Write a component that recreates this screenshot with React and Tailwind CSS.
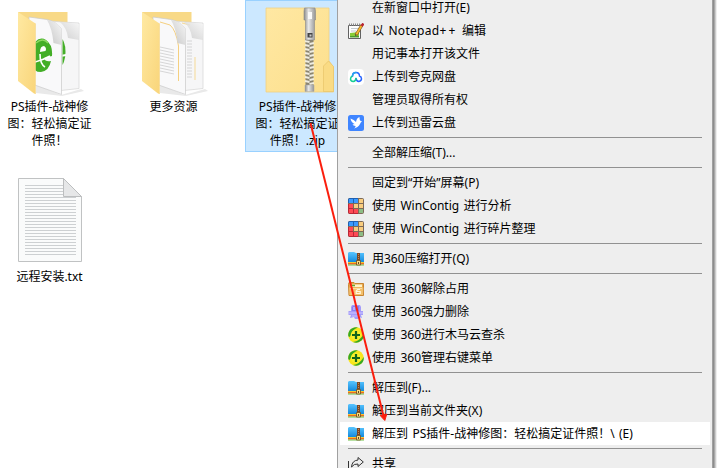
function OpenFolder({ children }) {
  return (
    <svg viewBox="2 2 96 96" className="w-24 h-24 shrink-0">
      <defs>
        <linearGradient id="flap" x1="0" y1="0" x2="1" y2="1">
          <stop offset="0" stopColor="#ffe9a2" />
          <stop offset="1" stopColor="#f9d57a" />
        </linearGradient>
        <linearGradient id="fold" x1="0" y1="1" x2="1" y2="0">
          <stop offset="0" stopColor="#c4c4c4" />
          <stop offset="1" stopColor="#f7f7f7" />
        </linearGradient>
        <clipPath id="front-page">
          <path d="M35 18 61 29V94L35 85Z" />
        </clipPath>
        <clipPath id="back-page">
          <path d="M62.500 24 79 24V89L62.500 92Z" />
        </clipPath>
      </defs>
      <path d="M36 85 61 95 81 89 84 91 62 96 36 93Z" fill="#e9e9e9" />
      <path d="M18 12h49.500v70L36 85Z" fill="#f8d987" />
      <path d="M50 21 62 22 79 23V88.500L56 91Z" fill="#f6f6f7" stroke="#d4d4d4" strokeWidth=".7" />
      <path d="M29 17 47 19.500Q57 22 61.500 29V94.500L29 83Z" fill="#f9f9fa" stroke="#c8c8c8" strokeWidth=".7" />
      {children}
      <path d="M47 20Q52 28 53.500 43L61.500 45V29Q57 21 47 20Z" fill="url(#fold)" />
      <path d="M60 22Q67 28 68 38L79 40V24Z" fill="url(#fold)" opacity=".8" />
      <path d="M18 12 35.500 23.500V94L34 93.500 18 81Z" fill="url(#flap)" />
      <path d="M35.500 23.500V94" stroke="#f5d78c" strokeWidth=".6" />
    </svg>
  );
}

function BrowserFolder() {
  return (
    <OpenFolder>
      <g clipPath="url(#back-page)">
        <ellipse cx="60" cy="52" rx="5.500" ry="14" fill="#45ae29" />
        <path d="M61 56 66 55" stroke="#fff" strokeWidth="2" />
      </g>
      <g clipPath="url(#front-page)">
        <path d="M34 43Q40 36 46 40Q53 45 52 56L44 58Q45 62 51 61Q49 71 41 72Q36 72 34 69Z" fill="#43ae27" />
        <path d="M40 52Q40 46 44 46Q47 48 45.500 51Z" fill="#fff" />
        <path d="M35 62Q43 60 50 56M40 54Q40 64 45 67" fill="none" stroke="#fff" strokeWidth="1.600" />
        <path d="M36 43Q43 37 48 43" fill="none" stroke="#8bd860" strokeWidth="1.500" />
      </g>
    </OpenFolder>
  );
}

function DocsFolder() {
  return (
    <OpenFolder>
      <path d="M36 22 46 25Q52 30 54.500 46V81" fill="none" stroke="#f5d080" strokeWidth="1" />
      <path d="M58 23 66 25M71 57V80" fill="none" stroke="#f5d996" strokeWidth="1" />
      <g stroke="#cdcdcd" strokeWidth=".8">
        <path d="M36 47 50 50M36 50 50 53M36 53 50 56M36 56 50 59M36 59 50 62M36 62 50 65M36 65 50 68M36 68 50 71M36 71 50 74" />
        <path d="M63 41 68 41M63 44 68 44M63 47 68 47M63 50 68 50M63 53 68 53M63 56 68 56M63 59 68 59M63 62 68 62M63 65 68 65M63 68 68 68M63 71 68 71M63 74 68 74M63 77 68 77" />
      </g>
    </OpenFolder>
  );
}

const teeth = Array.from({ length: 11 }, (_, i) => 41 + i * 4);

function ZipFolder() {
  return (
    <svg viewBox="250 2 96 96" className="w-24 h-24 shrink-0">
      <defs>
        <linearGradient id="zip" x1="0" y1="0" x2="1" y2="1">
          <stop offset="0" stopColor="#ffe8a3" />
          <stop offset="1" stopColor="#fcdf8c" />
        </linearGradient>
        <linearGradient id="metal">
          <stop offset="0" stopColor="#8b8b8b" />
          <stop offset=".4" stopColor="#e8e8e8" />
          <stop offset="1" stopColor="#949494" />
        </linearGradient>
      </defs>
      <path d="M266 8h63v53l4.500 6v25H266Z" fill="url(#zip)" stroke="#f0d083" strokeWidth=".8" />
      <path d="M323.500 91.500V66L328.500 61 333.500 66.500V91.500Z" fill="#fadb84" stroke="#e8c468" strokeWidth=".7" />
      <path d="M305.500 39h8v48h-8Z" fill="#8a8470" />
      {teeth.map((y) => (
        <g key={y} stroke="#efece0" strokeWidth="1.800">
          <path d={`M305 ${y}l4.500 1M309.500 ${y + 3}l4.500-1`} />
        </g>
      ))}
      <path d="M304.500 8h10.500l.5 3v9h-1v20h-9V20h-1.500v-9Z" fill="url(#metal)" stroke="#8c8c8c" strokeWidth=".6" />
      <path d="M308 12h4v7h-4Z" fill="#fafafa" />
      <path d="M307.500 33h5v4.500h-5Z" fill="#444" />
      <path d="M309.500 34.500h2v2h-2Z" fill="#ccc" />
      <path d="M305 85h9v6.500h-9Z" fill="url(#metal)" stroke="#aaa" strokeWidth=".5" />
    </svg>
  );
}

const textLines = Array.from({ length: 24 }, (_, i) => 185.5 + i * 3);

function TextFile() {
  return (
    <svg viewBox="2 172 96 96" className="w-24 h-24 shrink-0">
      <path d="M18.500 178.500H63.500L81.500 196.500V261.500H18.500Z" fill="#fafbfb" stroke="#c0c2c3" />
      {textLines.map((y) => (
        <path key={y} d={`M25 ${y}H${y < 197 ? 63 : 76}`} stroke="#cdd0d2" />
      ))}
      <path d="M63.500 178.500 81.500 196.500H63.500Z" fill="#e6e7e8" stroke="#bcbebf" />
    </svg>
  );
}

function NotepadIcon() {
  return (
    <svg viewBox="0 0 16 16" className="w-4 h-4">
      <path d="M.5 2.500h12v13H.5Z" fill="#fdfdfd" stroke="#626262" />
      <path d="M2 10Q7 10 11 8v6H2Z" fill="#87cc35" />
      <path d="M2 13h9v1.500H2Z" fill="#4c9b2b" />
      <path d="M1 1.500h11" stroke="#8b8b8b" strokeDasharray="1 1" strokeWidth="2" />
      <path d="M3 5.500h7M3 8h5" stroke="#c3cace" />
      <path d="M14 2 8 12" stroke="#795522" strokeWidth="3" />
      <path d="M14 2 8 12" stroke="#f8b62b" strokeWidth="1.800" />
      <path d="M15.500.5 13.500 3" stroke="#b82330" strokeWidth="2.500" />
      <path d="m7 13 .5-2 1.500 1Z" fill="#333" />
    </svg>
  );
}

function QuarkIcon() {
  return (
    <svg viewBox="0 0 16 16" className="w-4 h-4">
      <rect width="16" height="16" rx="4" fill="#fff" />
      <g fill="none" strokeWidth="1.500" strokeLinecap="round">
        <path d="M4.500 7Q4.700 3.500 8 3.500T11.500 7Q13.500 7.500 13.500 9.700T10.800 12.500Q8.500 12.300 8 9.500" stroke="#2864ff" />
        <path d="M4.500 7Q2.500 7.800 2.500 10T5.300 12.500Q7.500 12.300 8 9.500" stroke="#16ce93" />
        <path d="M4.500 7Q4.700 3.500 8 3.500" stroke="#25a5ed" />
      </g>
    </svg>
  );
}

function XunleiIcon() {
  return (
    <svg viewBox="0 0 16 16" className="w-4 h-4">
      <rect width="16" height="16" rx="2.500" fill="#3f85ff" />
      <path d="M2.500 3.500Q6 4.500 8 7Q8.500 3 11.500 2Q11.500 4 12 5.500L14 6.500Q12.500 7 12 9Q10.500 12 6 13.500Q8 12 7.500 11Q5 11 4.500 9Q6 9.500 6.500 9Q3 7 2.500 3.500Z" fill="#fff" />
    </svg>
  );
}

function WinContigIcon() {
  return (
    <svg viewBox="0 0 16 16" className="w-4 h-4">
      <rect width="16" height="16" rx="2" fill="#7d6a58" />
      <path d="M1 1h4v4H1ZM6 1h4v4H6Z" fill="#3b9aff" />
      <path d="M11 1h4v4h-4ZM11 6h4v4h-4ZM6 6h4v4H6Z" fill="#f9cd7e" />
      <path d="M1 6h4v4H1ZM1 11h4v4H1ZM6 11h4v4H6Z" fill="#ff4b55" />
      <path d="M11 11h4v4h-4Z" fill="#8dbd85" />
      <path d="M0 2q0-2 2-2h8v1H1v4H0ZM5 1h1v4H5Z" fill="#1e60b2" />
      <path d="M0 6h1v9h9v1H2q-2 0-2-2ZM5 11h1v4H5ZM1 10h4v1H1Z" fill="#bb2736" />
    </svg>
  );
}

function ZipIcon() {
  return (
    <svg viewBox="0 0 16 16" className="w-4 h-4">
      <defs>
        <linearGradient id="zip-blue" x1="0" y1="0" x2="0" y2="1">
          <stop offset="0" stopColor="#59c5ff" />
          <stop offset="1" stopColor="#1489dc" />
        </linearGradient>
      </defs>
      <path d="M0 2 1 1h5l2 1h8v9H0Z" fill="url(#zip-blue)" />
      <path d="M0 11h16v1H0Z" fill="#f5c62f" />
      <path d="M0 12h16v1.500H0Z" fill="#ef6b1e" />
      <path d="M0 13.500h16v1H0Z" fill="#6fc148" />
      <path d="M9 2h3v9H9Z" fill="#794728" />
      <path d="M10.500 3v7" stroke="#c9874a" strokeDasharray="1 1" />
      <path d="M8.500 9.500h4v4.500h-4Z" fill="#f8dc83" stroke="#6c4a1d" strokeWidth=".8" />
      <path d="M10.500 11v2" stroke="#6c4a1d" />
    </svg>
  );
}

function UnlockIcon() {
  return (
    <svg viewBox="0 0 16 16" className="w-4 h-4">
      <path d="M.5 3.500 1 1.500h5l1 1h8.500v12H1Z" fill="#e9a94c" stroke="#c88531" />
      <path d="M2 3.500h12v2.500H2Z" fill="#fff4ca" />
      <path d="M2 4.500h5" stroke="#62a934" strokeWidth="1.500" />
      <path d="M1 6.500h14.500l-.5 7.500H1.500Z" fill="#f3c06c" />
      <path d="M2 7.500h12" stroke="#fbdfa3" />
      <path d="M12 8.500H9.500l-1.300 1.500v2.500h4v-2h-3.500" fill="none" stroke="#fff7df" strokeWidth="1.200" />
    </svg>
  );
}

function DeleteIcon() {
  return (
    <svg viewBox="0 0 16 16" className="w-4 h-4">
      <path d="M4 1h8l1 2v4h2v4h-2l1 3-3-1-1 2H7l-1-2-4 1 1-3H.5V7H3V3Z" fill="#a49cfa" />
      <path d="M5 2h6v5H4V3Z" fill="#8780f0" />
      <path d="M5 3h2v3H5Z" fill="#b7b0ff" />
      <path d="M1 9h14" stroke="#c0b9ff" strokeWidth="1.500" />
      <path d="M4 12h8" stroke="#c9c2ff" />
    </svg>
  );
}

function ShieldIcon() {
  return (
    <svg viewBox="0 0 16 16" className="w-4 h-4">
      <circle cx="8" cy="8" r="7.800" fill="#f8e51c" />
      <path d="M.3 9A7.700 7.700 0 0 1 10 .5Q4 2.500 3 7T.3 9ZM15.700 7A7.700 7.700 0 0 1 5 15Q12 14 15.700 7Z" fill="#35a824" />
      <circle cx="8" cy="8" r="5" fill="#f6ef2c" />
      <path d="M8 4v8M4 8h8" stroke="#13651c" strokeWidth="2.200" />
    </svg>
  );
}

function ShareIcon() {
  return (
    <svg viewBox="0 0 16 16" className="w-4 h-4">
      <path d="M.5 5v10.500h11V12" fill="none" stroke="#333" />
      <path d="M10 1.500 15.300 6 10 10.500V8Q6 7.500 3.500 11Q4 4.500 10 4Z" fill="none" stroke="#333" strokeLinejoin="round" />
    </svg>
  );
}

const desktopFiles = [
  { id: 'plugin', lines: ['PS插件-战神修', '图：轻松搞定证', '件照！'], icon: BrowserFolder },
  { id: 'more', lines: ['更多资源'], icon: DocsFolder },
  { id: 'zip', lines: ['PS插件-战神修', '图：轻松搞定证', '件照！.zip'], icon: ZipFolder, selected: true },
  { id: 'txt', lines: ['远程安装.txt'], icon: TextFile },
];

const notepadLabel = (
  <>
    以 <span className="tracking-[0.3px]">Notepad</span><span className="tracking-[2.2px]">++</span> 编辑
  </>
);

const menuGroups = [
  [
    { id: 'open-window', label: '在新窗口中打开(E)' },
    { id: 'notepad-plus', label: notepadLabel, icon: NotepadIcon },
    { id: 'notepad', label: '用记事本打开该文件' },
    { id: 'quark', label: '上传到夸克网盘', icon: QuarkIcon },
    { id: 'owner', label: '管理员取得所有权' },
    { id: 'xunlei', label: '上传到迅雷云盘', icon: XunleiIcon },
  ],
  [{ id: 'extract-all', label: '全部解压缩(T)...' }],
  [
    { id: 'pin', label: '固定到“开始”屏幕(P)' },
    { id: 'analyze', label: '使用 WinContig 进行分析', icon: WinContigIcon },
    { id: 'defrag', label: '使用 WinContig 进行碎片整理', icon: WinContigIcon },
  ],
  [{ id: 'open-360', label: '用360压缩打开(Q)', icon: ZipIcon }],
  [
    { id: 'unlock', label: '使用 360解除占用', icon: UnlockIcon },
    { id: 'delete', label: '使用 360强力删除', icon: DeleteIcon },
    { id: 'scan', label: '使用 360进行木马云查杀', icon: ShieldIcon },
    { id: 'manage', label: '使用 360管理右键菜单', icon: ShieldIcon },
  ],
  [
    { id: 'extract-to', label: '解压到(F)...', icon: ZipIcon },
    { id: 'extract-here', label: '解压到当前文件夹(X)', icon: ZipIcon },
    { id: 'extract-named', label: '解压到 PS插件-战神修图：轻松搞定证件照！\\ (E)', icon: ZipIcon, active: true },
  ],
  [{ id: 'share', label: '共享', icon: ShareIcon }],
];

function DesktopFile({ file }) {
  const Icon = file.icon;
  return (
    <div className={`w-[107px] h-[152px] border flex flex-col items-center pt-px pr-[2px] ${file.selected ? 'bg-[#cce8ff] border-[#99d1ff]' : 'border-transparent'}`}>
      <Icon />
      <div className="text-center leading-[17px] whitespace-nowrap">
        {file.lines.map((line) => (
          <div key={line}>{line}</div>
        ))}
      </div>
    </div>
  );
}

function MenuItem({ item }) {
  const Icon = item.icon;
  return (
    <div className={`h-[23px] mx-[2px] pl-2 flex items-center whitespace-pre ${item.active ? 'bg-white' : ''}`}>
      <span className="w-6 shrink-0">{Icon && <Icon />}</span>
      <span className="leading-[17px] [word-spacing:1.3px]">{item.label}</span>
    </div>
  );
}

export default function App() {
  return (
    <div className="relative w-[717px] h-[468px] overflow-hidden bg-white text-black text-[12px] font-['Noto_Sans','Noto_Sans_CJK_SC',sans-serif]">
      <div className="grid grid-cols-[repeat(3,107px)] gap-x-[17px] gap-y-[18px] -ml-[3px] w-[355px]">
        {desktopFiles.map((file) => (
          <DesktopFile key={file.id} file={file} />
        ))}
      </div>

      <div className="absolute left-[337px] -top-[4px] w-[375px] h-[480px] bg-[#eeeeee] border-l border-[#a0a0a0]">
        {menuGroups.map((group, i) => (
          <div key={i}>
            {i > 0 && <div className="h-[7px] pt-[3px] px-[10px]"><div className="h-px bg-[#919191]" /></div>}
            {group.map((item) => (
              <MenuItem key={item.id} item={item} />
            ))}
          </div>
        ))}
      </div>
      <div className="absolute left-[712px] top-0 w-[5px] h-full flex">
        <div className="w-px bg-[#a0a0a0]" />
        <div className="w-px bg-[#8c8c8c]" />
        <div className="w-px bg-[#a8a8a8]" />
        <div className="w-px bg-[#cccccc]" />
        <div className="w-px bg-[#eeeeee]" />
      </div>

      <svg viewBox="0 0 717 468" className="absolute left-0 top-0 w-[717px] h-[468px] pointer-events-none">
        <path d="M310.500 123 383.300 415" stroke="#fb1e0d" strokeWidth="2" />
        <path d="M384.800 420.500 380.200 415.500 386.800 414Z" fill="#fb1e0d" stroke="#fb1e0d" />
      </svg>
    </div>
  );
}
